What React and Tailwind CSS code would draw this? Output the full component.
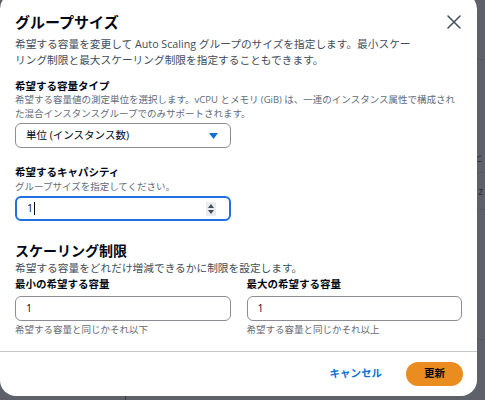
import React from "react";

const font = { fontFamily: '"Open Sans", "Noto Sans CJK JP", sans-serif' };

const Field = ({ label, hint, value }) => (
  <div className="flex flex-col">
    <div className="text-[10.5px] leading-[14px] font-bold text-[#000716]">{label}</div>
    <div className="mt-[5px] h-[25px] rounded-[6px] border border-[#8c8c94] flex items-center pl-[10px] text-[10.5px] text-[#000716]">
      {value}
    </div>
    <div className="mt-[2px] text-[9.5px] leading-[14px] text-[#656871]">{hint}</div>
  </div>
);

const App = () => {
  return (
    <div className="relative w-[485px] h-[400px] overflow-hidden bg-[#5e616a]" style={font}>
      {/* page behind the overlay */}
      <div className="flex flex-col pl-[125px]">
        <div className="h-[60px] border-b border-[#555861]"></div>
        <div className="h-[113px] border-b border-[#555861] flex items-end justify-end pb-[6px] pr-[2px] text-[10px] text-[#2c2f36]">ヒ</div>
        <div className="h-[37px] border-b border-[#555861] flex items-center justify-end pr-[2px] text-[10px] text-[#2c2f36]">z</div>
        <div className="h-[130px] border-b border-[#555861]"></div>
        <div className="h-[60px] border-l border-[#3f424a]"></div>
      </div>

      {/* modal */}
      <div className="absolute left-0 top-[-7px] w-[477px] h-[403px] bg-white rounded-[16px] flex flex-col">
        <div className="px-[15px] pt-[19px] flex flex-col">
          <div className="flex items-center justify-between">
            <h2 className="text-[15px] leading-[20px] font-bold text-[#000716]">グループサイズ</h2>
            <svg width="14" height="14" viewBox="0 0 14 14" className="mr-[1px]">
              <path d="M1 1 13 13M13 1 1 13" stroke="#414d5c" strokeWidth="1.5" strokeLinecap="round" fill="none" />
            </svg>
          </div>
          <p className="mt-[4px] text-[10.7px] leading-[16px] text-[#414d5c]">
            希望する容量を変更して Auto Scaling グループのサイズを指定します。最小スケー
            <br />
            リング制限と最大スケーリング制限を指定することもできます。
          </p>

          <div className="mt-[12px] text-[10.5px] leading-[13px] font-bold text-[#000716]">希望する容量タイプ</div>
          <p className="text-[9.5px] leading-[14px] text-[#5f6b7a]">
            希望する容量値の測定単位を選択します。vCPU とメモリ (GiB) は、一連のインスタンス属性で構成され
            <br />
            た混合インスタンスグループでのみサポートされます。
          </p>
          <div className="mt-[2px] w-[216px] h-[25px] rounded-[6px] border border-[#8c8c94] flex items-center justify-between pl-[10px] pr-[12px] text-[10.5px] text-[#000716]">
            <span>単位 (インスタンス数)</span>
            <svg width="9" height="6" viewBox="0 0 9 6">
              <path d="M0 0h9L4.5 6z" fill="#0972d3" />
            </svg>
          </div>

          <div className="mt-[17px] text-[10.5px] leading-[14px] font-bold text-[#000716]">希望するキャパシティ</div>
          <p className="mt-[1px] text-[9.5px] leading-[13px] text-[#5f6b7a]">グループサイズを指定してください。</p>
          <div className="mt-[3px] w-[216px] h-[25px] rounded-[6px] border-2 border-[#1f6fe0] flex items-center justify-between pl-[10px] pr-[13px] text-[10.5px] text-[#000716]">
            <span className="flex items-center">
              1<span className="ml-[1px] w-px h-[13px] bg-[#000716]"></span>
            </span>
            <span className="w-[10px] h-[14px] bg-[#ebebee] flex flex-col items-center justify-center gap-[2px]">
              <svg width="6" height="4" viewBox="0 0 6 4"><path d="M0 4h6L3 0z" fill="#414d5c" /></svg>
              <svg width="6" height="4" viewBox="0 0 6 4"><path d="M0 0h6L3 4z" fill="#414d5c" /></svg>
            </span>
          </div>

          <h3 className="mt-[21px] text-[14px] leading-[18px] font-bold text-[#000716]">スケーリング制限</h3>
          <p className="text-[10.7px] leading-[16px] text-[#414d5c]">希望する容量をどれだけ増減できるかに制限を設定します。</p>
          <div className="mt-[1px] grid grid-cols-2 gap-x-[16px]">
            <Field label="最小の希望する容量" hint="希望する容量と同じかそれ以下" value="1" />
            <Field label="最大の希望する容量" hint="希望する容量と同じかそれ以上" value="1" />
          </div>
        </div>

        <div className="mt-[14px] border-t border-[#c6c6cd]"></div>

        <div className="flex items-center justify-end gap-[24px] pt-[10px] pr-[14px]">
          <span className="text-[10.5px] font-bold text-[#0972d3]">キャンセル</span>
          <span className="w-[57px] h-[24px] rounded-full bg-[#ea8c1f] flex items-center justify-center text-[10.5px] font-bold text-[#000716]">
            更新
          </span>
        </div>
      </div>
    </div>
  );
};

export default App;
